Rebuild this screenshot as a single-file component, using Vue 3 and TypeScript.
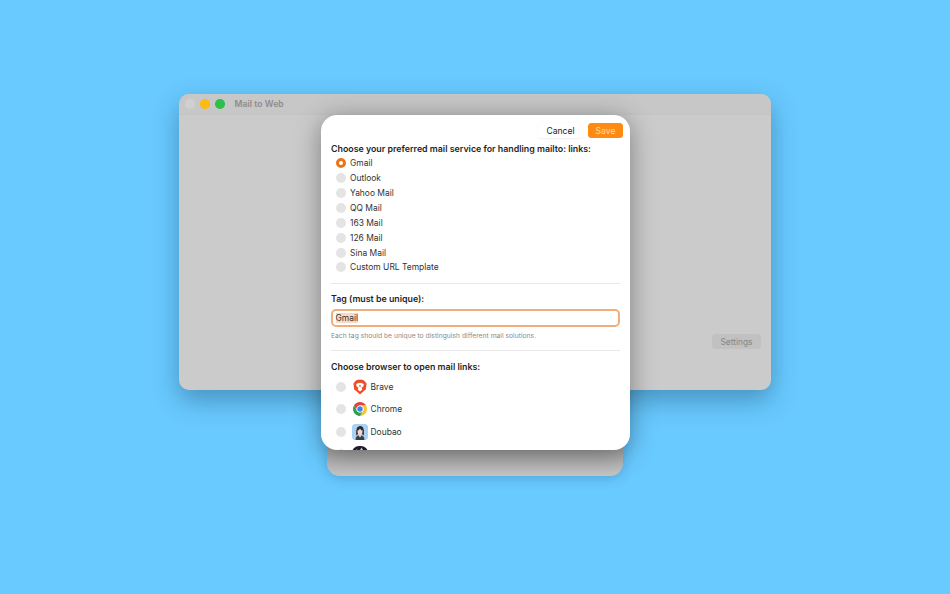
<script setup lang="ts">
const services: string[] = ['Gmail', 'Outlook', 'Yahoo Mail', 'QQ Mail', '163 Mail', '126 Mail', 'Sina Mail', 'Custom URL Template']
</script>

<template>
  <div class="desktop">
    <section class="window">
      <header class="titlebar">
        <span class="light grey"></span>
        <span class="light yellow"></span>
        <span class="light green"></span>
        <span class="title">Mail to Web</span>
      </header>
      <div class="window-body">
        <button class="settings">Settings</button>
      </div>
    </section>

    <div class="under-sheet"></div>

    <section class="sheet">
      <div class="actions">
        <button class="btn cancel">Cancel</button>
        <button class="btn save">Save</button>
      </div>
      <h2 class="heading first">Choose your preferred mail service for handling mailto: links:</h2>
      <ul class="radio-list">
        <li v-for="(s, i) in services" :key="s" class="radio-row">
          <span class="radio" :class="{ on: i === 0 }"></span>
          <span>{{ s }}</span>
        </li>
      </ul>
      <hr class="rule rule-a" />
      <h2 class="heading">Tag (must be unique):</h2>
      <div class="input"><span class="selected">Gmail</span></div>
      <p class="hint">Each tag should be unique to distinguish different mail solutions.</p>
      <hr class="rule rule-b" />
      <h2 class="heading">Choose browser to open mail links:</h2>
      <ul class="browser-list">
        <li class="browser-row">
          <span class="radio"></span>
          <svg class="app" viewBox="0 0 16 16">
            <path d="M8 .4 11.2 1 13.3 2.800 14.600 4.800 13.800 10.200 8 15.600 2.200 10.200 1.400 4.800 2.700 2.800 4.800 1Z" fill="#ee4f2a" />
            <path d="M8 3.800 10 4.200 11.800 5 11.300 7.400 9.500 8.800 10.300 10.400 8 12.400 5.700 10.400 6.500 8.800 4.700 7.400 4.200 5 6 4.200Z" fill="#fff" />
            <path d="M8 8 6.600 6.800 8 6.300 9.400 6.800Z" fill="#ee4f2a" />
          </svg>
          <span class="name">Brave</span>
        </li>
        <li class="browser-row">
          <span class="radio"></span>
          <svg class="app" viewBox="0 0 16 16">
            <path d="M8 1A7 7 0 0 1 14.060 4.500H8A3.500 3.500 0 0 0 4.970 9.750L1.940 4.500A7 7 0 0 1 8 1Z" fill="#e2443a" />
            <path d="M14.060 4.500A7 7 0 0 1 8 15L11.030 9.750A3.500 3.500 0 0 0 8 4.500Z" fill="#f8c52c" />
            <path d="M8 15A7 7 0 0 1 1.940 4.500L4.970 9.750A3.500 3.500 0 0 0 11.030 9.750Z" fill="#2f9e4f" />
            <circle cx="8" cy="8" r="3.500" fill="#fff" />
            <circle cx="8" cy="8" r="2.700" fill="#3f82ef" />
          </svg>
          <span class="name">Chrome</span>
        </li>
        <li class="browser-row">
          <span class="radio"></span>
          <svg class="app" viewBox="0 0 16 16">
            <rect width="16" height="16" rx="3.500" fill="#a9d1f5" />
            <path d="M3.600 16C3.400 12.800 5 11.200 8 11.200s4.600 1.600 4.400 4.800Z" fill="#3a3f50" />
            <path d="M4.400 11.500C3.800 6 4.600 2 8.300 2c3.300 0 4.100 4 3.400 9.500L10 10H6Z" fill="#2d2a2e" />
            <path d="M6.800 10h2.400v2.200L8 13.200 6.800 12.200Z" fill="#f2cdbb" />
            <ellipse cx="8" cy="7.600" rx="2.500" ry="3.200" fill="#f6d8c9" />
            <path d="M5.400 6.800C6.400 6.400 7.400 5.400 8 4.400c.6 1.200 1.600 2 2.600 2.400L10 4H6.400Z" fill="#2d2a2e" />
          </svg>
          <span class="name">Doubao</span>
        </li>
        <li class="browser-row">
          <span class="radio"></span>
          <svg class="app" viewBox="0 0 16 16">
            <rect width="16" height="16" rx="7" fill="#1f1a2e" />
            <path d="M6.800 6 9.500 1.500 12.200 6Z" fill="#f8c93f" />
            <path d="M2.500 6 4.800 2.800 7 6Z" fill="#b8503f" />
          </svg>
        </li>
      </ul>
    </section>
  </div>
</template>

<style>
html, body { margin: 0; padding: 0; }
</style>

<style scoped>
.desktop {
  position: relative;
  width: 950px;
  height: 594px;
  overflow: hidden;
  background: #69caff;
  font-family: Inter, "Liberation Sans", sans-serif;
  color: #2a2a2a;
}
.window {
  position: absolute;
  left: 179px;
  top: 94px;
  width: 592px;
  height: 296px;
  box-sizing: border-box;
  border-radius: 10px;
  background: #cbcbcb;
  box-shadow: 0 10px 26px rgba(20, 60, 90, .4);
  display: flex;
  flex-direction: column;
  overflow: hidden;
}
.titlebar {
  height: 21px;
  flex: none;
  box-sizing: border-box;
  padding: 0 0 0 6px;
  display: flex;
  align-items: center;
  gap: 6px;
  background: #c7c7c7;
  border-bottom: 1px solid #c3c3c3;
}
.light { width: 9.500px; height: 9.500px; border-radius: 50%; }
.light + .light { margin-left: -.5px; }
.grey { background: #d0d0d0; }
.yellow { background: #fdbb11; }
.green { background: #2bc04a; }
.title { margin-left: 4px; font-size: 8.600px; font-weight: 600; color: #8d8d8d; letter-spacing: .05px; }
.window-body {
  flex: 1;
  display: flex;
  align-items: flex-end;
  justify-content: flex-end;
  padding: 0 10px 41px 0;
}
.settings {
  width: 49px;
  height: 15px;
  padding: 0;
  border: 0;
  border-radius: 3.500px;
  background: #c1c1c1;
  color: #868686;
  font: 400 8.400px Inter, "Liberation Sans", sans-serif;
}
.under-sheet {
  position: absolute;
  left: 327px;
  top: 390px;
  width: 296px;
  height: 86px;
  border-radius: 0 0 13px 13px;
  background: linear-gradient(#a6a6a6 60px, #c6c6c6 86px);
  box-shadow: 0 3px 12px rgba(20, 60, 90, .2);
}
.sheet {
  position: absolute;
  left: 320.500px;
  top: 115px;
  width: 309.500px;
  height: 335px;
  box-sizing: border-box;
  padding: 8px 10.500px 0;
  border-radius: 16px;
  background: #fff;
  box-shadow: 0 4px 26px rgba(0, 0, 0, .38);
  overflow: hidden;
}
.actions { display: flex; justify-content: flex-end; gap: 5px; margin-right: -3.500px; height: 15px; }
.btn {
  height: 15px;
  padding: 0;
  border: 0;
  border-radius: 3.500px;
  font: 400 8.600px Inter, "Liberation Sans", sans-serif;
}
.cancel { width: 45px; background: #fff; color: #222; box-shadow: 0 .5px 2px rgba(0,0,0,.06); }
.save { width: 35px; background: #ff8a12; color: #ffd9a8; }
.heading { margin: 0; font-size: 8.830px; line-height: 12px; font-weight: 600; color: #1f1f1f; white-space: nowrap; }
.first { margin-top: 5px; }
.radio-list, .browser-list { list-style: none; margin: 0; padding: 0 0 0 5px; }
.radio-list { margin-top: 1px; }
.radio-row { display: flex; align-items: center; gap: 4px; height: 14.860px; font-size: 8.450px; color: #333; }
.radio { width: 10px; height: 10px; box-sizing: border-box; border-radius: 50%; background: #e4e4e4; flex: none; }
.radio.on { background: #fff; border: 3px solid #ec7418; }
.rule { border: 0; border-top: 1px solid #e8e8e8; margin: 0; }
.rule-a { margin-top: 8px; margin-bottom: 9.500px; }
.input {
  margin-top: 3.500px;
  height: 18px;
  box-sizing: border-box;
  border: 2px solid #f2ad7d;
  border-radius: 5px;
  padding-left: 2.500px;
  font-size: 8.450px;
  line-height: 14px;
  color: #333;
}
.selected { background: #f8d9c0; }
.hint { margin: 4.500px 0 0; font-size: 6.760px; line-height: 9px; color: #8c8c8c; white-space: nowrap; }
.rule-b { margin-top: 9.500px; margin-bottom: 10px; }
.browser-list { margin-top: 2.500px; }
.browser-row { display: flex; align-items: center; height: 22.500px; font-size: 8.450px; color: #333; }
.browser-row .radio { margin-right: 5.500px; }
.app { width: 16px; height: 16px; margin-right: 3px; flex: none; }
</style>
